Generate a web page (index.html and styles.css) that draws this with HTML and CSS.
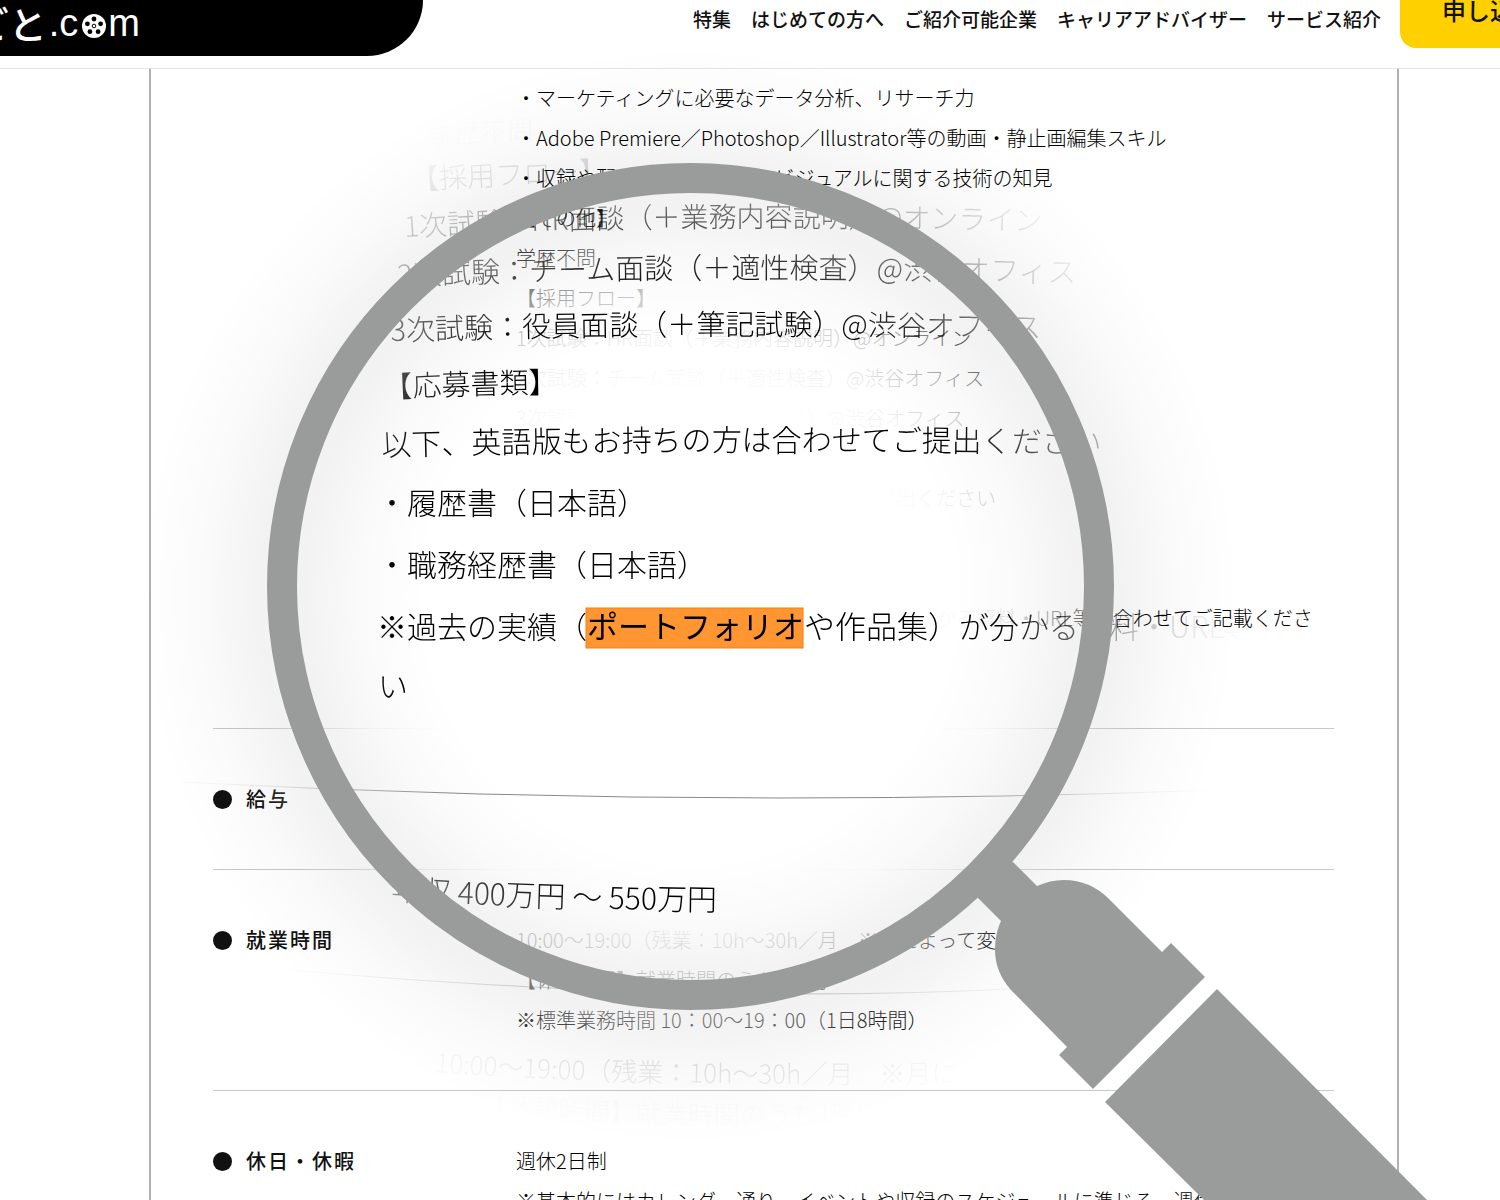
FILE: index.html
```html
<!DOCTYPE html>
<html lang="ja">
<head>
    <meta charset="utf-8">
    <title>しごと.com</title>
    <link rel="stylesheet" href="styles.css">
</head>
<body>
    <header class="site-header">
        <a class="logo" href="#">
            <span class="logo-kana">しごと</span>
            <span class="logo-latin">.c</span>
            <svg class="logo-reel" viewBox="0 0 24 24">
                <circle cx="12" cy="12" r="12" fill="#fff"/>
                <circle cx="12" cy="5" r="2.4"/>
                <circle cx="18.6" cy="9.8" r="2.4"/>
                <circle cx="16.1" cy="17.7" r="2.4"/>
                <circle cx="7.9" cy="17.7" r="2.4"/>
                <circle cx="5.4" cy="9.8" r="2.4"/>
                <circle cx="12" cy="12" r="1.8" fill="none" stroke="#000"/>
            </svg>
            <span class="logo-latin">m</span>
        </a>
        <nav class="site-nav">
            <a href="#">特集</a>
            <a href="#">はじめての方へ</a>
            <a href="#">ご紹介可能企業</a>
            <a href="#">キャリアアドバイザー</a>
            <a href="#">サービス紹介</a>
        </nav>
        <button class="apply-button">申し込む</button>
    </header>

    <main class="job">
        <dl class="job-list">
            <div class="job-row job-row-first">
                <dt></dt>
                <dd>
                    ・マーケティングに必要なデータ分析、リサーチ力<br>
                    ・Adobe Premiere／Photoshop／Illustrator等の動画・静止画編集スキル<br>
                    ・収録や配信等、オーディオビジュアルに関する技術の知見<br>
                    【その他】<br>
                    学歴不問<br>
                    【採用フロー】<br>
                    1次試験：HR面談（＋業務内容説明）@オンライン<br>
                    2次試験：チーム面談（＋適性検査）@渋谷オフィス<br>
                    3次試験：役員面談（＋筆記試験）@渋谷オフィス<br>
                    【応募書類】<br>
                    以下、英語版もお持ちの方は合わせてご提出ください<br>
                    ・履歴書（日本語）<br>
                    ・職務経歴書（日本語）<br>
                    ※過去の実績（ポートフォリオや作品集）が分かる資料・URL等も合わせてご記載くださ<br>
                    い
                </dd>
            </div>
            <div class="job-row">
                <dt>給与</dt>
                <dd>年収 400万円 〜 550万円</dd>
            </div>
            <div class="job-row">
                <dt>就業時間</dt>
                <dd>
                    10:00〜19:00（残業：10h〜30h／月　※月によって変動）<br>
                    【休憩時間】就業時間のうち1時間<br>
                    ※標準業務時間 10：00〜19：00（1日8時間）
                </dd>
            </div>
            <div class="job-row">
                <dt>休日・休暇</dt>
                <dd>
                    週休2日制<br>
                    ※基本的にはカレンダー通り、イベントや収録のスケジュールに準じる、週休
                </dd>
            </div>
        </dl>
    </main>

    <svg class="magnifier" width="1500" height="1200" viewBox="0 0 1500 1200">
        <defs>
            <radialGradient id="fade" gradientUnits="userSpaceOnUse" cx="690" cy="635" r="480">
                <stop offset="0.5" stop-color="#fff"/>
                <stop offset="0.62" stop-color="#fff" stop-opacity="0.94"/>
                <stop offset="0.72" stop-color="#fff" stop-opacity="0.78"/>
                <stop offset="0.8" stop-color="#fff" stop-opacity="0.5"/>
                <stop offset="0.88" stop-color="#fff" stop-opacity="0.2"/>
                <stop offset="0.96" stop-color="#fff" stop-opacity="0"/>
            </radialGradient>
            <radialGradient id="shade" gradientUnits="userSpaceOnUse" cx="690" cy="596" r="550">
                <stop offset="0.48" stop-color="#000" stop-opacity="0"/>
                <stop offset="0.6" stop-color="#000" stop-opacity="0.02"/>
                <stop offset="0.7" stop-color="#000" stop-opacity="0.05"/>
                <stop offset="0.78" stop-color="#000" stop-opacity="0.05"/>
                <stop offset="0.88" stop-color="#000" stop-opacity="0.02"/>
                <stop offset="1" stop-color="#000" stop-opacity="0"/>
            </radialGradient>
            <radialGradient id="lensGradient" gradientUnits="userSpaceOnUse" cx="690" cy="600" r="560">
                <stop offset="0.55" stop-color="#fff"/>
                <stop offset="0.69" stop-color="#fff" stop-opacity="0.6"/>
                <stop offset="0.8" stop-color="#fff" stop-opacity="0.22"/>
                <stop offset="0.9" stop-color="#fff" stop-opacity="0.08"/>
                <stop offset="1" stop-color="#fff" stop-opacity="0"/>
            </radialGradient>
            <mask id="lensMask" maskUnits="userSpaceOnUse" x="0" y="0" width="1500" height="1200">
                <rect width="1500" height="1200" fill="url(#lensGradient)"/>
            </mask>
            <path id="curveSchool" d="M430 146 Q480 140 600 138"/>
            <path id="curveFlow" d="M412 190 Q510 184 640 180"/>
            <path id="curveFirst" d="M405 237 Q700 219 1100 233"/>
            <path id="curveSecond" d="M398 286 Q700 272 1120 284"/>
            <path id="curveThird" d="M391 341 Q700 330 1100 339"/>
            <path id="curveDocs" d="M384 398 Q460 394 600 392"/>
            <path id="curveBelow" d="M382 456 Q700 447 1140 454"/>
            <path id="curveSalary" d="M391 900 Q560 910 760 911"/>
            <path id="curveHours" d="M435 1072 Q640 1088 1020 1082"/>
            <path id="curveBreak" d="M480 1114 Q680 1130 900 1122"/>
        </defs>

        <circle cx="690" cy="635" r="480" fill="url(#fade)"/>
        <circle cx="690" cy="596" r="550" fill="url(#shade)"/>

        <!-- enlarged copy of the list inside the lens -->
        <g class="lens-text" mask="url(#lensMask)">
            <text class="size-xs lens-faint"><textPath href="#curveSchool">学歴不問</textPath></text>
            <text class="size-s lens-soft"><textPath href="#curveFlow">【採用フロー】</textPath></text>
            <text class="size-s"><textPath href="#curveFirst">1次試験：HR面談（＋業務内容説明）@オンライン</textPath></text>
            <text class="size-m"><textPath href="#curveSecond">2次試験：チーム面談（＋適性検査）@渋谷オフィス</textPath></text>
            <text class="size-m"><textPath href="#curveThird">3次試験：役員面談（＋筆記試験）@渋谷オフィス</textPath></text>
            <text class="size-m"><textPath href="#curveDocs">【応募書類】</textPath></text>
            <text class="size-l"><textPath href="#curveBelow">以下、英語版もお持ちの方は合わせてご提出ください</textPath></text>
            <text class="size-l" x="377" y="514">・履歴書（日本語）</text>
            <text class="size-l" x="377" y="576">・職務経歴書（日本語）</text>
            <rect class="hit" x="586" y="608" width="217" height="40"/>
            <text class="size-l" x="377" y="638">※過去の実績（<tspan class="size-xl hit-word">ポートフォリオ</tspan><tspan class="size-xl">や作品集）</tspan>が分かる資料・URL等</text>
            <text class="size-l" x="378" y="697">い</text>
            <text class="size-l"><textPath href="#curveSalary">年収 400万円 〜 550万円</textPath></text>
            <text class="size-xs lens-soft"><textPath href="#curveHours">10:00〜19:00（残業：10h〜30h／月　※月に</textPath></text>
            <text class="size-xs lens-faint"><textPath href="#curveBreak">【休憩時間】就業時間のうち1時間</textPath></text>
            <path class="lens-rule" d="M180 782 Q480 798 780 798 Q1010 798 1215 790"/>
            <path class="lens-rule" d="M290 970 Q560 994 800 994 Q920 994 1030 988"/>
        </g>

        <g class="glass">
            <circle class="glass-ring" cx="690.5" cy="586.5" r="408.5"/>
            <path d="M1013 862 L1037 886 Q1050 880 1064 880 Q1090 880 1109 899 L1162 952 L1171 943 L1205 977 L1093 1089 L1059 1055 L1067 1047 L1011 990 Q995 972 995 950 Q995 934 1001 921 L978 898 L975 870 Z"/>
            <path d="M1217 989 L1105 1102 L1204 1200 L1427 1200 Z"/>
        </g>
    </svg>
</body>
</html>
```

FILE: styles.css
```css
* {
    box-sizing: border-box;
}

body {
    margin: 0;
    position: relative;
    height: 100vh;
    overflow: hidden;
    background: #fff;
    color: #111;
    font-family: 'Noto Sans CJK JP', sans-serif;
}

a {
    color: inherit;
    text-decoration: none;
}

/* header */
.site-header {
    display: flex;
    align-items: flex-start;
    height: 69px;
    border-bottom: 1px solid #e4e4e4;
}

.logo {
    display: flex;
    align-items: center;
    justify-content: flex-end;
    flex: none;
    width: 423px;
    height: 56px;
    padding-right: 283px;
    padding-bottom: 10px;
    overflow: hidden;
    background: #000;
    color: #fff;
    border-bottom-right-radius: 62px;
    white-space: nowrap;
}

.logo-kana {
    margin-right: 2px;
    font-size: 38px;
    font-weight: 500;
    line-height: 48px;
}

.logo-latin {
    font-family: 'Liberation Sans', sans-serif;
    font-size: 38px;
    line-height: 48px;
}

.logo-reel {
    flex: none;
    width: 24px;
    height: 24px;
    margin: 6px 2px 0 4px;
}

.site-nav {
    display: flex;
    gap: 20px;
    margin-left: auto;
    padding-top: 5px;
    font-size: 19px;
    font-weight: 500;
    line-height: 28px;
    white-space: nowrap;
}

.apply-button {
    flex: none;
    width: 180px;
    height: 74px;
    margin: -26px -80px 0 19px;
    padding: 0 0 4px 42px;
    border: none;
    border-radius: 16px;
    background: #ffd000;
    color: #111;
    font-family: inherit;
    font-size: 24px;
    font-weight: 500;
    text-align: left;
    white-space: nowrap;
    cursor: pointer;
}

/* job details */
.job {
    margin: 0 101px 0 149px;
    padding: 0 63px 0 62px;
    border: solid #b0b0b0;
    border-width: 0 2px;
}

.job-list {
    margin: 0;
}

.job-row {
    display: grid;
    grid-template-columns: 303px 1fr;
    padding: 50px 0;
    border-bottom: 1px solid #c8c8c8;
    font-size: 20px;
    line-height: 40px;
}

.job-row-first {
    padding-top: 9px;
}

.job-row:last-child {
    border-bottom: none;
}

.job-row dt {
    display: flex;
    align-items: center;
    gap: 14px;
    height: 40px;
    font-weight: 500;
    letter-spacing: 2px;
}

.job-row dt:not(:empty)::before {
    content: '';
    width: 19px;
    height: 19px;
    border-radius: 50%;
    background: #111;
}

.job-row dd {
    margin: 0;
    color: #000;
    font-weight: 300;
    white-space: nowrap;
}

/* magnifier laid over the page */
.magnifier {
    position: absolute;
    top: 0;
    left: 0;
    pointer-events: none;
}

.lens-text {
    fill: #000;
    font-weight: 300;
}

.size-xs {
    font-size: 26px;
}

.size-s {
    font-size: 28px;
}

.size-m {
    font-size: 29px;
}

.size-l {
    font-size: 30px;
}

.size-xl {
    font-size: 31px;
}

.hit {
    fill: #ff9632;
    stroke: #ff7a10;
}

.hit-word {
    font-weight: 400;
}

.lens-soft {
    opacity: 0.6;
}

.lens-faint {
    opacity: 0.2;
}

.lens-rule {
    fill: none;
    stroke: #888;
}

.glass {
    fill: #9a9c9b;
}

.glass-ring {
    fill: none;
    stroke: #9a9c9b;
    stroke-width: 30;
}
```
